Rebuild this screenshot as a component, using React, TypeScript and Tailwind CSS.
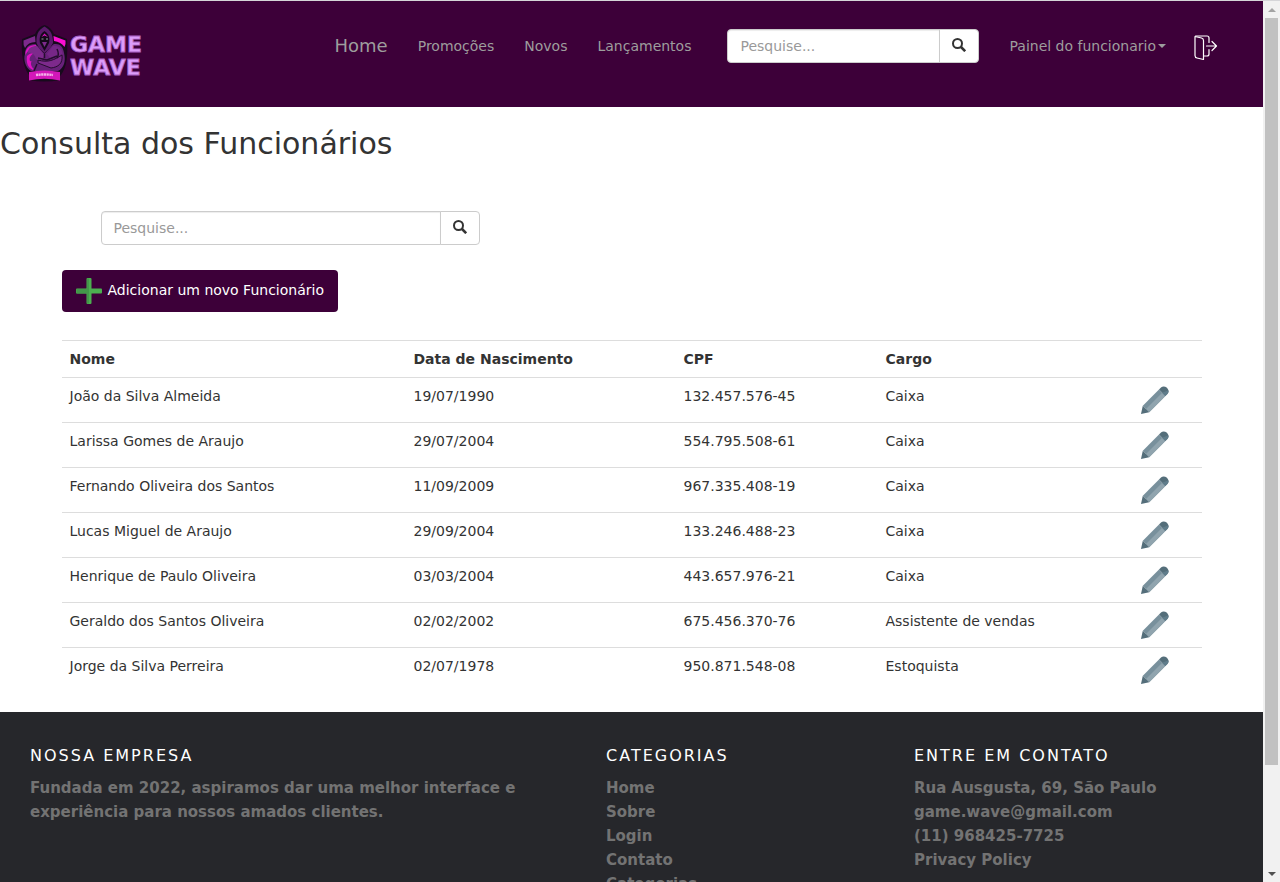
import React from "react";

const employees = [
  ["João da Silva Almeida", "19/07/1990", "132.457.576-45", "Caixa"],
  ["Larissa Gomes de Araujo", "29/07/2004", "554.795.508-61", "Caixa"],
  ["Fernando Oliveira dos Santos", "11/09/2009", "967.335.408-19", "Caixa"],
  ["Lucas Miguel de Araujo", "29/09/2004", "133.246.488-23", "Caixa"],
  ["Henrique de Paulo Oliveira", "03/03/2004", "443.657.976-21", "Caixa"],
  ["Geraldo dos Santos Oliveira", "02/02/2002", "675.456.370-76", "Assistente de vendas"],
  ["Jorge da Silva Perreira", "02/07/1978", "950.871.548-08", "Estoquista"],
];

function Logo() {
  return (
    <svg width="126" height="60" viewBox="0 0 126 60" role="img" aria-label="Game Wave">
      <path d="M1 14 L14 9 Q17 2 23.500 0 Q30 2 33 9 L46 14 C47 30 46 42 40 50 C33 58 15 58 8 50 C2 42 0 28 1 14Z" fill="#170a1c" />
      <path d="M2.500 15.500 L14 11 L14.500 17 Q7 17 4 23 Q2 20 2.500 15.500Z" fill="#7d2a8c" />
      <path d="M44.500 15.500 L32.500 11 L33 16 Q40 17 43.500 22 Q45 19 44.500 15.500Z" fill="#fb0fd2" />
      <path d="M23.500 1.500 C17 5 15 10 15.500 18 L18 23 L23.500 28 L29 23 L32 18 C32 10 30 5 23.500 1.500Z" fill="#5b1a6b" />
      <path d="M23.500 6 C19 9 18 13 19 18 L23.500 26 L28 18 C29 13 28 9 23.500 6Z" fill="#14081a" />
      <path d="M20.500 12 L23.500 8.500 L27 12 L23.500 10.500Z" fill="#e012c4" />
      <path d="M20.500 14h2M25 14h2" stroke="#8fa39a" />
      <path d="M21 17h5l-2.500 5Z" fill="#7d2a8c" />
      <path d="M14.500 19 C7 19 4 23 4 29 C2 35 5 43 10 46 L37 46 C43 43 45 36 43 28 C42 21 38 18 32 19.500 L23.500 29Z" fill="#68217a" />
      <path d="M15 20 C8 20 4 24 4.500 30 C7 25 10 23 15 22Z M6 31 C8 29 10 28 13 28 C9 31 8 33 9 36 L16 38 L12 45 C7 43 5 38 6 31Z" fill="#e012c4" />
      <path d="M16 21 C10 21 7 23 7 28 C11 27 14 30 15 34 L21 36 L23 30Z" fill="#7d2a8c" />
      <path d="M11 36 C9 38 10 42 13 44 L18 38Z" fill="#68217a" />
      <path d="M32 21 C38 20 41 24 41.500 29 L36 31 L29 33 L26 29Z" fill="#762787" />
      <path d="M17 35 C27 38 33 35 41 30 C42 39 37 42 30 43 L17 38Z" fill="#7d2a8c" stroke="#250d2e" />
      <path d="M17 33 L26 35 L36 31 M23.500 29 V33 M36 24 C38 28 38 30 36 33 M16 39 L13 46" fill="none" stroke="#250d2e" strokeWidth="1.500" />
      <path d="M8 46 Q23.500 49 39 46 V55 Q23.500 58 8 55Z" fill="#170a1c" />
      <path d="M8 47 Q23.500 44 39 47 V55.500 Q23.500 52 8 55.500Z" fill="#d317b9" />
      <path d="M15 50 Q23 49 32 50" fill="none" stroke="#f3b0e8" strokeWidth="2.400" strokeDasharray="2.200 .5" />
      <g fontFamily="'DejaVu Sans', sans-serif" fontWeight="700" fontSize="22" fill="#dc9cfa" stroke="#a860c4" strokeWidth=".8">
        <text x="49" y="27">GAME</text>
        <text x="49" y="50">WAVE</text>
      </g>
    </svg>
  );
}

function SearchIcon() {
  return (
    <svg width="14" height="14" viewBox="0 0 14 14" fill="none" stroke="#333" aria-hidden="true">
      <circle cx="5.500" cy="5.500" r="4.500" strokeWidth="2" />
      <path d="M9 9l4.200 4.200" strokeWidth="2.600" />
    </svg>
  );
}

function ExitIcon() {
  return (
    <svg width="26" height="26" viewBox="0 0 26 26" fill="none" stroke="#fff" strokeWidth="1.200" strokeLinejoin="round" strokeLinecap="round" aria-hidden="true">
      <path d="M1 1.500 L7.500 3 Q9.500 3.500 9.500 5.500 V24.500 L3 23 Q1 22.500 1 20.500Z" />
      <path d="M1.500 1 H13 Q15 1 15 3 V7.500 M15 14.500 V19 Q15 21 13 21 H9.500" />
      <path d="M12.500 11 H22 M18 6.500 L22.500 11 L18 15.500" />
    </svg>
  );
}

function PencilIcon() {
  return (
    <svg width="28" height="28" viewBox="0 0 28 28" aria-hidden="true">
      <path d="M1.800 19.800 L18 3.600 L24.400 10 L8.200 26.200Z" fill="#78909c" />
      <path d="M5 23 L21.200 6.800 L24.400 10 L8.200 26.200Z" fill="#90a4ae" />
      <path d="M0 28 L1.800 19.800 L8.200 26.200Z" fill="#546e7a" />
      <path d="M18 3.600 L20 1.600 Q22.500 -.8 26 1.800 Q29 5.500 26.400 8 L24.400 10Z" fill="#546e7a" />
      <path d="M21.200 6.800 L27.400 4.200 Q28 6.400 26.400 8 L24.400 10Z" fill="#607d8b" />
    </svg>
  );
}

function Search({ id, className }: { id: string; className: string }) {
  return (
    <form className={className} onSubmit={(e) => e.preventDefault()}>
      <input
        id={id}
        type="text"
        aria-label="Pesquise"
        placeholder="Pesquise..."
        className="h-[34px] min-w-0 flex-1 rounded-l border border-[#ccc] bg-white px-3 text-sm shadow-[inset_0_1px_1px_rgba(0,0,0,0.075)] outline-none placeholder:text-[#999]"
      />
      <button type="submit" aria-label="Pesquisar" className="-ml-px flex h-[34px] w-10 items-center justify-center rounded-r border border-[#ccc] bg-white pb-0.5">
        <SearchIcon />
      </button>
    </form>
  );
}

function FooterColumn({ title, items }: { title: string; items: string[] }) {
  return (
    <div>
      <h6 className="mb-2 text-base leading-6 tracking-[2px] text-white uppercase">{title}</h6>
      <ul className="font-bold">
        {items.map((item) => (
          <li key={item}><a href="#">{item}</a></li>
        ))}
      </ul>
    </div>
  );
}

export default function App() {
  return (
    <div className="flex h-screen overflow-hidden bg-white font-['DejaVu_Sans',sans-serif] text-sm leading-5 text-[#333]">
      <div className="min-w-0 flex-1 overflow-hidden">
        <header className="flex h-[107px] items-start border-t border-[#d5d5d8] bg-[#3d0039] text-[#9d9d9d]">
          <a href="#" className="mt-6 ml-[21px] shrink-0"><Logo /></a>
          <nav className="ml-auto flex items-start pt-7 pr-[43px]">
            <div className="flex h-[34px] items-center gap-[30px]">
              <a href="#" className="text-lg">Home</a>
              <a href="#">Promoções</a>
              <a href="#">Novos</a>
              <a href="#">Lançamentos</a>
            </div>
            <Search id="site-search" className="ml-9 flex w-[252px]" />
            <button type="button" className="ml-[30px] flex h-[34px] items-center gap-0.5 whitespace-nowrap">
              Painel do funcionario
              <span className="border-x-4 border-t-4 border-x-transparent border-t-[#9d9d9d]" />
            </button>
            <a href="#" aria-label="Sair" className="ml-7 pt-1.5"><ExitIcon /></a>
          </nav>
        </header>

        <main className="pb-5">
          <h2 className="pt-5 text-[30px] leading-[34px]">Consulta dos Funcionários</h2>
          <div className="mx-auto max-w-[1140px] pt-[50px]">
            <Search id="employee-search" className="ml-[39px] flex w-[379px]" />
            <button type="button" className="mt-[25px] flex h-[42px] items-center gap-[5px] rounded bg-[#3d0039] px-3.5 text-white">
              <svg width="27" height="26" viewBox="0 0 27 26" aria-hidden="true">
                <rect x="10.500" width="5" height="26" rx="1" fill="#4caf50" />
                <rect y="10.500" width="26" height="5" rx="1" fill="#4caf50" />
                <path d="M11 .5h2v25h-2v-10H.5v-4.500H11Z" fill="#43984a" />
              </svg>
              <span className="pb-0.5">Adicionar um novo Funcionário</span>
            </button>
            <table className="mt-7 w-full table-fixed text-left">
              <colgroup>
                <col className="w-[344px]" />
                <col className="w-[270px]" />
                <col className="w-[202px]" />
                <col />
                <col className="w-[69px]" />
              </colgroup>
              <thead>
                <tr className="border-t border-[#ddd]">
                  {["Nome", "Data de Nascimento", "CPF", "Cargo"].map((h) => (
                    <th key={h} className="p-2 font-bold">{h}</th>
                  ))}
                  <td />
                </tr>
              </thead>
              <tbody>
                {employees.map((row) => (
                  <tr key={row[0]} className="border-t border-[#ddd] align-top">
                    {row.map((cell) => (
                      <td key={cell} className="p-2">{cell}</td>
                    ))}
                    <td className="p-2">
                      <button type="button" aria-label={`Editar ${row[0]}`} className="block"><PencilIcon /></button>
                    </td>
                  </tr>
                ))}
              </tbody>
            </table>
          </div>
        </main>

        <footer className="grid grid-cols-[576fr_308fr_319fr] bg-[#26272b] px-[30px] pt-8 pb-10 text-[15px] leading-6 text-[#737373]">
          <div className="pr-10">
            <h6 className="mb-2 text-base leading-6 tracking-[2px] text-white uppercase">Nossa empresa</h6>
            <p className="font-bold">Fundada em 2022, aspiramos dar uma melhor interface e experiência para nossos amados clientes.</p>
          </div>
          <FooterColumn title="Categorias" items={["Home", "Sobre", "Login", "Contato", "Categorias"]} />
          <FooterColumn title="Entre em contato" items={["Rua Ausgusta, 69, São Paulo", "game.wave@gmail.com", "(11) 968425-7725", "Privacy Policy"]} />
        </footer>
      </div>

      <div aria-hidden="true" className="flex w-[17px] shrink-0 flex-col items-center border-t border-[#d5d5d8] bg-[#f1f1f1]">
        <div className="flex h-[17px] items-center">
          <span className="border-x-4 border-b-4 border-x-transparent border-b-[#a3a3a3]" />
        </div>
        <div className="w-[13px] flex-[747] bg-[#c1c1c1]" />
        <div className="flex-[100]" />
        <div className="flex h-[17px] items-center">
          <span className="border-x-4 border-t-4 border-x-transparent border-t-[#505050]" />
        </div>
      </div>
    </div>
  );
}
